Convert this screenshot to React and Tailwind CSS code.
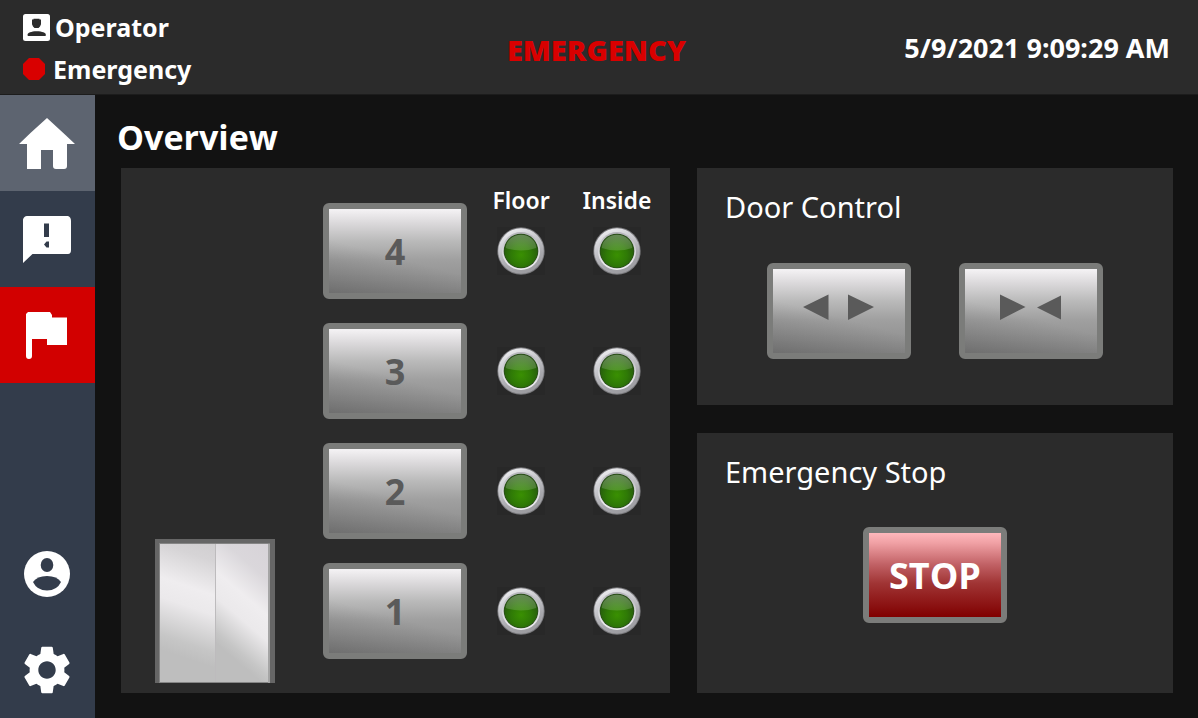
import React from "react";
import { MdSettings } from "react-icons/md";

const FLOORS = [4, 3, 2, 1];

function OperatorIcon() {
  return (
    <svg viewBox="0 0 27 27" className="size-[27px]" aria-hidden="true">
      <rect width="27" height="27" rx="2.5" fill="#fff" />
      <path d="M9 5.500h1.500V4.700h6v.8H18v4.800l-1 2.200-1.500 1.500h-4L10 12.500 9 10.300z" fill="#2b2b2b" />
      <path d="M4.700 22v-1.700c0-1.200 3.200-3.100 9-3.100s9 1.900 9 3.100V22z" fill="#2b2b2b" />
    </svg>
  );
}

function StopSignIcon() {
  return (
    <svg viewBox="0 0 22 22" className="size-[22px]" aria-hidden="true">
      <path d="M6 0h10l6 6v10l-6 6H6l-6-6V6z" fill="#d90000" />
    </svg>
  );
}

function HomeIcon() {
  return (
    <svg viewBox="0 0 56 51" className="h-[51px] w-14" fill="#fff" aria-hidden="true">
      <path d="M28 0 47 17.500 56 26h-8v22q0 3-3 3h-8q-3 0-3-3V32H22v19H8V26H0L12 14.500z" />
    </svg>
  );
}

function AlertIcon() {
  return (
    <svg viewBox="0 0 48 47" className="h-[47px] w-12" aria-hidden="true">
      <path d="M4 0h41q3 1 3 5v29q0 4-3 4H9.500L0 47V3.500Q1 0 4 0z" fill="#fff" />
      <path d="M21 7.500h5V21h-5zM26 25.500h-2.500L21 28.500l2.500 3H26z" fill="#333c4b" />
    </svg>
  );
}

function FlagIcon() {
  return (
    <svg viewBox="0 0 41 47" className="h-[47px] w-[41px]" fill="#fff" aria-hidden="true">
      <path d="M2 0h22l2 3v2.500h15V33H21v-6H6v17q0 3-3 3t-3-3V2z" />
    </svg>
  );
}

function UserIcon() {
  return (
    <svg viewBox="0 0 46 46" className="size-[46px]" aria-hidden="true">
      <circle cx="23" cy="23" r="23" fill="#fff" />
      <ellipse cx="23" cy="14" rx="6.300" ry="7" fill="#333c4b" />
      <path d="M9 31q4-6 14-6t14 6q-4 8.500-14 8.500T9 31z" fill="#333c4b" />
    </svg>
  );
}

function Elevator() {
  return (
    <svg viewBox="0 0 120 144" className="h-36 w-[120px]" role="img" aria-label="Elevator car at floor 1">
      <defs>
        <linearGradient id="doorL" gradientUnits="userSpaceOnUse" x1="48" y1="0" x2="10" y2="112">
          <stop offset="0" stopColor="#d0ced0" />
          <stop offset="0.15" stopColor="#d6d4d6" />
          <stop offset="0.42" stopColor="#efedef" />
          <stop offset="0.58" stopColor="#ebe9eb" />
          <stop offset="0.88" stopColor="#c6c6c6" />
          <stop offset="1" stopColor="#bebebe" />
        </linearGradient>
        <linearGradient id="doorR" gradientUnits="userSpaceOnUse" x1="113" y1="5" x2="42" y2="88">
          <stop offset="0" stopColor="#d7d3d8" />
          <stop offset="0.25" stopColor="#dad7db" />
          <stop offset="0.5" stopColor="#efedef" />
          <stop offset="0.68" stopColor="#ebe9eb" />
          <stop offset="0.92" stopColor="#c6c6c6" />
          <stop offset="1" stopColor="#bebebe" />
        </linearGradient>
      </defs>
      <rect width="120" height="144" fill="#666" />
      <rect x="4" y="4" width="111" height="140" fill="#858585" />
      <rect x="5" y="5" width="56" height="138" fill="url(#doorL)" />
      <rect x="61" y="5" width="52" height="138" fill="url(#doorR)" />
      <rect x="60" y="5" width="1" height="138" fill="#bdbbbd" />
      <rect x="113" y="5" width="2" height="139" fill="#a5a5a5" />
    </svg>
  );
}

function Lamp({ label }) {
  return (
    <svg viewBox="0 0 48 48" className="size-12" role="img" aria-label={label}>
      <defs>
        <linearGradient id="ring" x1="0.3" y1="0" x2="0.7" y2="1">
          <stop offset="0" stopColor="#ededf0" />
          <stop offset="0.35" stopColor="#c8c8cd" />
          <stop offset="0.7" stopColor="#a6a6ab" />
          <stop offset="1" stopColor="#9a9a9e" />
        </linearGradient>
        <linearGradient id="rim" x1="0" y1="0" x2="0" y2="1">
          <stop offset="0" stopColor="#b4b4b9" />
          <stop offset="0.5" stopColor="#d6d6da" />
          <stop offset="1" stopColor="#efeff1" />
        </linearGradient>
        <radialGradient id="glow" cx="0.5" cy="0.62" r="0.6">
          <stop offset="0" stopColor="#3a9002" />
          <stop offset="0.5" stopColor="#2f7a06" />
          <stop offset="1" stopColor="#24560d" />
        </radialGradient>
        <linearGradient id="gloss" x1="0" y1="0" x2="0" y2="1">
          <stop offset="0" stopColor="#fff" stopOpacity="0.3" />
          <stop offset="1" stopColor="#fff" stopOpacity="0.14" />
        </linearGradient>
      </defs>
      <rect width="48" height="48" fill="#282828" />
      <circle cx="24" cy="24" r="23.700" fill="#77777a" />
      <circle cx="24" cy="24" r="22.800" fill="url(#ring)" />
      <circle cx="24" cy="24" r="19" fill="url(#rim)" />
      <circle cx="24" cy="24" r="17.300" fill="#2a4a1c" />
      <circle cx="24" cy="24" r="16.600" fill="url(#glow)" />
      <path d="M8.800 21a15.200 13.200 0 0 1 30.400 0q-15.200 5-30.400 0z" fill="url(#gloss)" />
    </svg>
  );
}

function NavItem({ label, className = "", children }) {
  return (
    <a href="#" aria-label={label} className={"flex h-24 items-center justify-center pr-[2px] " + className}>
      {children}
    </a>
  );
}

function PushButton({ label, className, children }) {
  return (
    <button
      type="button"
      aria-label={label}
      className={
        "flex h-24 w-36 shrink-0 items-center justify-center rounded-md border-[6px] border-[#7b7c7a] bg-origin-padding pt-[2px] text-4xl font-bold " +
        (className || "bg-[linear-gradient(15deg,rgba(0,0,0,0.2)_0%,rgba(0,0,0,0)_45%),linear-gradient(180deg,#f5f3f5_0%,#dcdadc_16%,#bababa_38%,#a0a0a0_60%,#8a8a8a_100%)] text-[#5a5a5a]")
      }
    >
      {children}
    </button>
  );
}

function LampColumn({ title }) {
  return (
    <div className="flex w-24 flex-col items-center pt-[18px]">
      <h3 className="mb-3 font-['Noto_Sans',sans-serif] text-[23px] leading-[29px] font-semibold">{title}</h3>
      <div className="flex flex-col gap-[72px]">
        {FLOORS.map((f) => (
          <Lamp key={f} label={title + " lamp " + f} />
        ))}
      </div>
    </div>
  );
}

export default function App() {
  return (
    <div className="flex min-h-screen flex-col bg-[#121212] font-['Open_Sans','Noto_Sans',sans-serif] text-white">
      <header className="grid h-[95px] grid-cols-[1fr_auto_1fr] items-center border-b border-[#1c1c1c] bg-[#2b2b2b] pt-[2px] pr-7 pl-[23px] font-['Noto_Sans',sans-serif] font-bold">
        <div className="flex flex-col gap-2 text-[25px] leading-[34px]">
          <div className="flex items-center gap-[5px]">
            <OperatorIcon />
            <span>Operator</span>
          </div>
          <div className="flex items-center gap-2">
            <StopSignIcon />
            <span>Emergency</span>
          </div>
        </div>
        <strong className="pt-1 text-[29px] text-[#d90000]">EMERGENCY</strong>
        <time className="text-right text-[27px]">5/9/2021 9:09:29 AM</time>
      </header>

      <div className="flex flex-1">
        <nav className="flex w-[95px] shrink-0 flex-col bg-[#333c4b]">
          <NavItem label="Home" className="bg-[#5d6470]"><HomeIcon /></NavItem>
          <NavItem label="Alerts"><AlertIcon /></NavItem>
          <NavItem label="Flags" className="bg-[#d20000]"><FlagIcon /></NavItem>
          <div className="flex-1" />
          <NavItem label="Account"><UserIcon /></NavItem>
          <NavItem label="Settings"><MdSettings size={58} /></NavItem>
        </nav>

        <main className="flex flex-1 flex-col pt-[18px] pr-[25px] pb-[25px] pl-[26px]">
          <h1 className="-ml-1 mb-[7px] text-[34px] leading-[48px] font-bold">Overview</h1>
          <div className="grid flex-1 grid-cols-[549fr_476fr] gap-[27px]">
            <section className="flex bg-[#2b2b2b] pl-[34px]" aria-label="Floors">
              <div className="mr-12 flex items-end pb-[10px]">
                <Elevator />
              </div>
              <div className="mr-[6px] flex flex-col gap-6 pt-[35px]">
                {FLOORS.map((f) => (
                  <PushButton key={f}>{f}</PushButton>
                ))}
              </div>
              <LampColumn title="Floor" />
              <LampColumn title="Inside" />
            </section>

            <div className="flex flex-col gap-7">
              <section className="h-[237px] bg-[#2b2b2b] pt-5">
                <h2 className="mb-[37px] pl-7 font-['Noto_Sans',sans-serif] text-[29px] leading-[38px]">Door Control</h2>
                <div className="flex justify-center gap-12">
                  <PushButton label="Open doors">
                    <svg viewBox="0 0 132 84" className="-mt-[2px] h-[84px] w-full" fill="#5a5a5a" aria-hidden="true">
                      <path d="M30 38 55.500 25.500v25.500zM75 25.500 101 38 75 51z" />
                    </svg>
                  </PushButton>
                  <PushButton label="Close doors">
                    <svg viewBox="0 0 132 84" className="-mt-[2px] h-[84px] w-full" fill="#5a5a5a" aria-hidden="true">
                      <path d="M35 25.500 60.500 38 35 51zM72 38.500 96 26.500v24z" />
                    </svg>
                  </PushButton>
                </div>
              </section>
              <section className="flex-1 bg-[#2b2b2b] pt-5">
                <h2 className="mb-9 pl-7 font-['Noto_Sans',sans-serif] text-[29px] leading-[38px]">Emergency Stop</h2>
                <div className="flex justify-center">
                  <PushButton className="bg-[linear-gradient(180deg,#ffb8bc_0%,#f0a0a4_12%,#c06064_38%,#a03434_60%,#800000_100%)] text-white">
                    STOP
                  </PushButton>
                </div>
              </section>
            </div>
          </div>
        </main>
      </div>
    </div>
  );
}
